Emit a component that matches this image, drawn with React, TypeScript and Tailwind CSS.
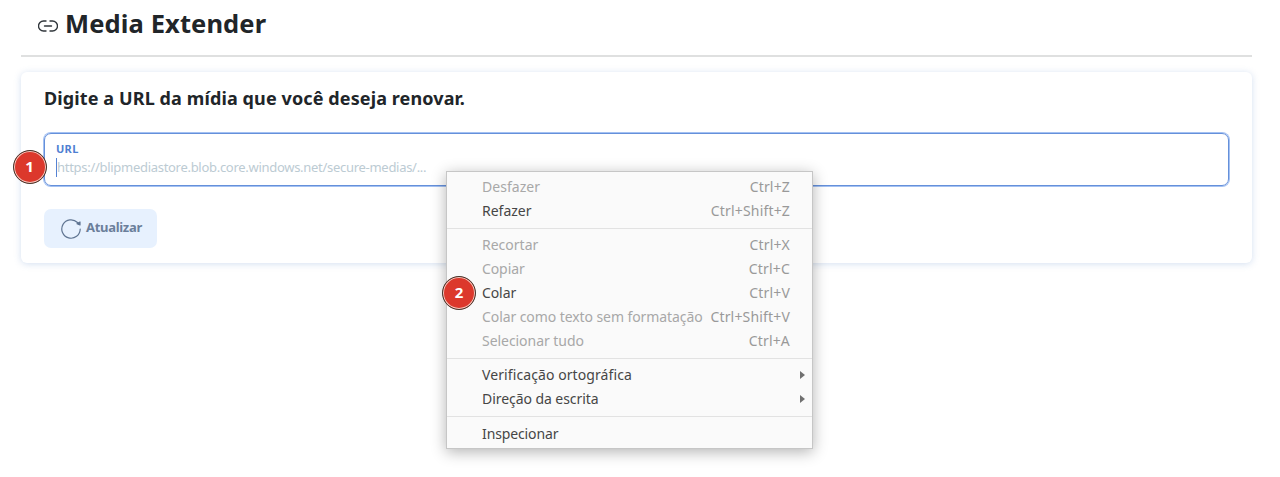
import React from "react";

type Item = {
  label: string;
  tracking: string;
  shortcut?: string;
  enabled?: boolean;
  submenu?: boolean;
};

const groups: Item[][] = [
  [
    { label: "Desfazer", tracking: "tracking-[0.05px]", shortcut: "Ctrl+Z" },
    { label: "Refazer", tracking: "tracking-[0px]", shortcut: "Ctrl+Shift+Z", enabled: true },
  ],
  [
    { label: "Recortar", tracking: "tracking-[0px]", shortcut: "Ctrl+X" },
    { label: "Copiar", tracking: "tracking-[-0.1px]", shortcut: "Ctrl+C" },
    { label: "Colar", tracking: "tracking-[-0.1px]", shortcut: "Ctrl+V", enabled: true },
    { label: "Colar como texto sem formatação", tracking: "tracking-[-0.08px]", shortcut: "Ctrl+Shift+V" },
    { label: "Selecionar tudo", tracking: "tracking-[-0.05px]", shortcut: "Ctrl+A" },
  ],
  [
    { label: "Verificação ortográfica", tracking: "tracking-[0.09px]", enabled: true, submenu: true },
    { label: "Direção da escrita", tracking: "tracking-[-0.06px]", enabled: true, submenu: true },
  ],
  [{ label: "Inspecionar", tracking: "tracking-[-0.12px]", enabled: true }],
];

function Badge({ n, place }: { n: number; place: string }) {
  return (
    <span
      className={`absolute ${place} z-20 flex size-[34px] items-center justify-center rounded-full border border-[#44382f] bg-[#dc382c] pb-px font-['Open_Sans','Noto_Sans',sans-serif] text-[15px] font-bold leading-none text-white shadow-[inset_0_0_0_1px_#f3c9c0]`}
    >
      {n}
    </span>
  );
}

function ContextMenu() {
  return (
    <div className="absolute left-[446px] top-[171px] z-10 h-[278px] w-[367px] border border-[#c6c6c6] bg-[#fafafa] pt-[3px] text-[14px] shadow-[0_3px_14px_rgba(0,0,0,0.3)]">
      {groups.map((group, g) => (
        <div key={g}>
          {g > 0 && (
            <div className="flex h-[10.3px] items-center">
              <div className="h-px w-full bg-[#e2e2e2]" />
            </div>
          )}
          {group.map((item) => (
            <div
              key={item.label}
              className={`flex h-6 items-center justify-between whitespace-nowrap pl-[35px] ${
                g < 3 ? "pb-[2px]" : ""
              } ${item.submenu ? "pr-[7px]" : "pr-[22px]"} ${
                item.enabled ? "text-[#464646]" : "text-[#a8a8a8]"
              }`}
            >
              <span className={item.tracking}>{item.label}</span>
              {item.shortcut && (
                <span className="tracking-[0.17px] text-[#999999]">{item.shortcut}</span>
              )}
              {item.submenu && (
                <svg width="5" height="8" viewBox="0 0 5 8" fill="#707070">
                  <path d="M0 0 5 4 0 8Z" />
                </svg>
              )}
            </div>
          ))}
        </div>
      ))}
    </div>
  );
}

export default function App() {
  return (
    <main className="relative h-[477px] w-[1280px] overflow-hidden bg-white px-[21px] font-['Noto_Sans','Open_Sans',sans-serif] text-[#212529]">
      <header className="flex h-[57px] w-[1231px] items-center border-b-2 border-[#dfe0e0] pb-[7px] pl-[17px]">
        <svg className="mt-[3px]" width="20" height="12" viewBox="0 0 20 12" fill="none" stroke="#30363b" strokeWidth="1.4" strokeLinecap="round">
          <path d="M8 1H5.500a4.700 4.700 0 0 0 0 10H8M12 1h2.500a4.700 4.700 0 0 1 0 10H12M6.500 6h7" />
        </svg>
        <h1 className="ml-[7px] whitespace-nowrap text-[25.5px] font-bold leading-none tracking-[0.12px]">
          Media Extender
        </h1>
      </header>

      <section className="mt-[15px] h-[191px] w-[1231px] rounded-[6px] bg-white px-[23px] pt-[15px] shadow-[0_1px_7px_rgba(110,150,205,0.3)]">
        <h2 className="whitespace-nowrap text-[18px] font-bold leading-[22px] tracking-[0.11px]">
          Digite a URL da mídia que você deseja renovar.
        </h2>
        <div className="mt-[24px] h-[53px] w-[1185px] rounded-[7px] border border-[#6590da] pl-[11px] pt-[7px] shadow-[0_0_0_1px_#a4c1f2]">
          <div className="text-[11px] font-bold leading-[15px] tracking-[0.3px] text-[#4f80d2]">URL</div>
          <div className="mt-[2px] flex h-[19px] items-center border-l border-[#5583d4] text-[13px] tracking-[-0.29px] text-[#bccbd3]">
            https://blipmediastore.blob.core.windows.net/secure-medias/...
          </div>
        </div>
        <button className="mt-[23px] flex h-[39px] w-[113px] items-center rounded-[7px] bg-[#e7f1fe] pl-[17px] text-[13px] font-bold tracking-[-0.3px] text-[#6b7f9b]">
          <svg width="20" height="20" viewBox="0 0 20 20" fill="none" stroke="#607592" strokeWidth="1.2" strokeLinecap="round" strokeLinejoin="round">
            <path d="M19.200 10a9.200 9.200 0 1 1-2.700-6.500L18 5" />
            <path d="M19 3v3l-3-1.300Z" fill="#607592" />
          </svg>
          <span className="ml-[5px] pb-px">Atualizar</span>
        </button>
      </section>

      <Badge n={1} place="left-[12.5px] top-[150px]" />
      <ContextMenu />
      <Badge n={2} place="left-[442px] top-[275.5px]" />
    </main>
  );
}
